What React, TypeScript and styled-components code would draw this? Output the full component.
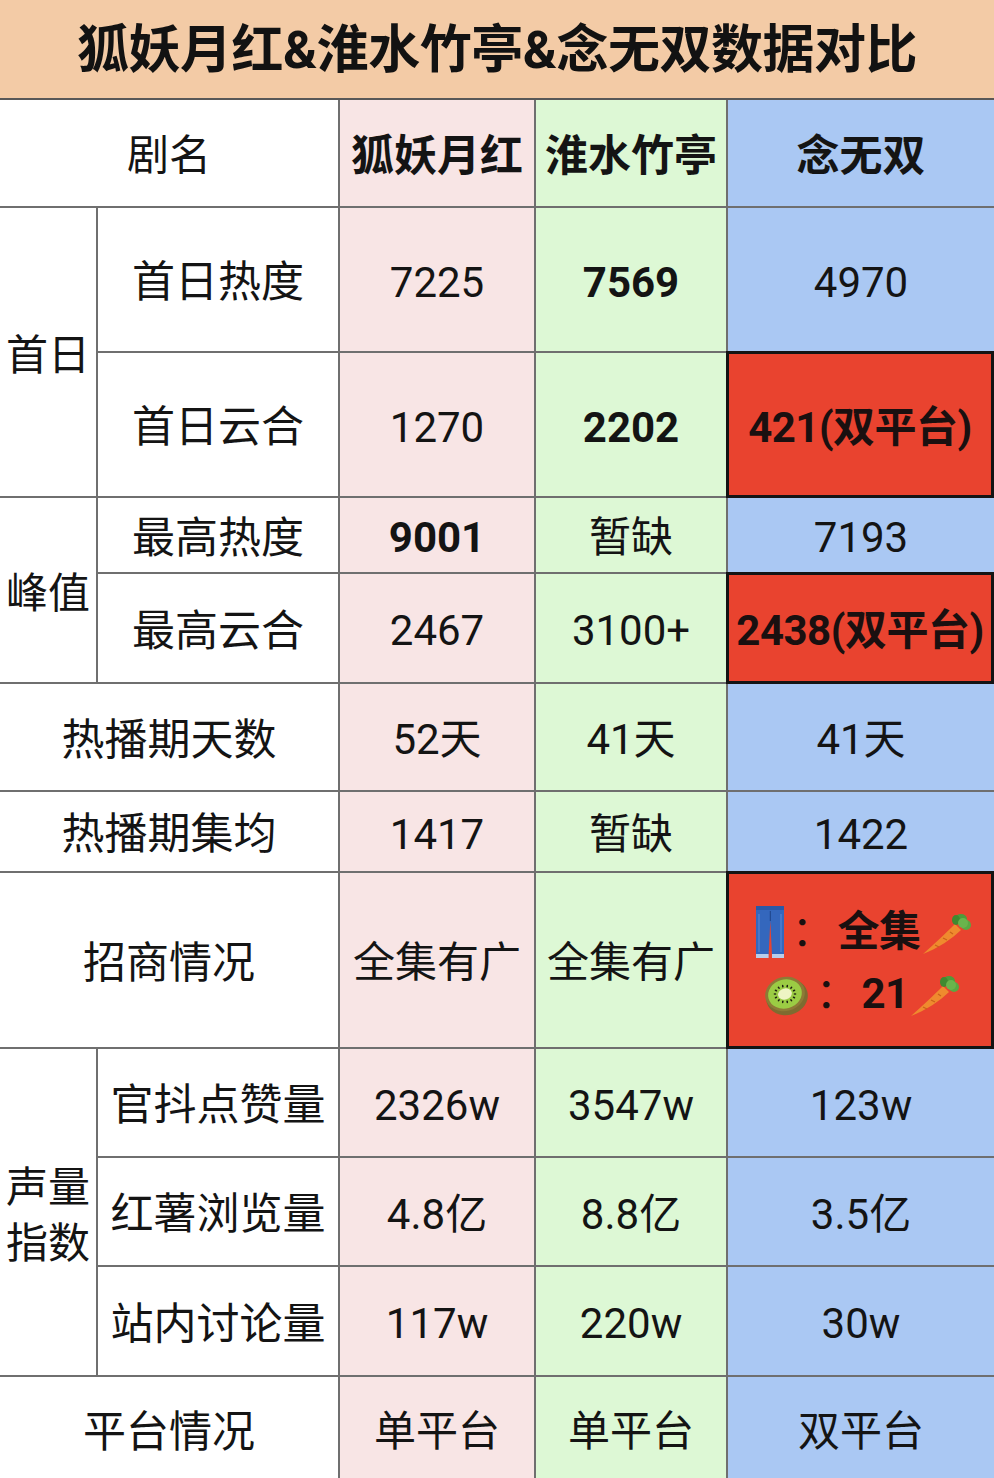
import React from 'react';
import styled, { createGlobalStyle } from 'styled-components';

const GlobalStyle = createGlobalStyle`
    html, body {
        margin: 0;
        padding: 0;
        background: #fff;
    }
    body {
        font-family: Roboto, "Noto Sans CJK SC", sans-serif;
        color: #141414;
    }
`;

const LINE = '#6f6f6f';

const Page = styled.div`
    width: 994px;
    height: 1478px;
    overflow: hidden;
    background: #fff;
`;

const TitleBar = styled.div`
    height: 100px;
    padding-bottom: 8px;
    box-sizing: border-box;
    display: flex;
    align-items: center;
    justify-content: center;
    background: #f3cba6;
    border-bottom: 2px solid #585858;
    font-size: 52px;
    font-weight: 700;
    color: #121212;
    letter-spacing: -0.5px;
`;

const Table = styled.div`
    display: grid;
    grid-template-columns: 98px 242px 196px 192px 266px;
    grid-template-rows: 108px 145px 145px 76px 110px 108px 81px 176px 109px 109px 110px 106px;
`;

interface ICell {
    $row: string;
    $col: string;
    $bg?: string;
    $bold?: boolean;
    $size?: number;
}

const Cell = styled.div<ICell>`
    grid-row: ${(p) => p.$row};
    grid-column: ${(p) => p.$col};
    box-sizing: border-box;
    display: flex;
    align-items: center;
    justify-content: center;
    padding-top: 7px;
    text-align: center;
    background: ${(p) => p.$bg || '#fff'};
    border-right: 2px solid ${LINE};
    border-bottom: 2px solid ${LINE};
    font-size: ${(p) => p.$size || 42}px;
    font-weight: ${(p) => (p.$bold ? 700 : 400)};
    line-height: 1.3;
    white-space: nowrap;
`;

const Alert = styled(Cell)`
    background: #e9432f;
    border: 3px solid #141414;
    margin: -2px 0 0 -2px;
    font-weight: 700;
    color: #1a1010;
    letter-spacing: -0.5px;
`;

const LastCol = styled(Cell)`
    border-right: none;
`;

const Sponsor = styled.div`
    display: flex;
    flex-direction: column;
    align-items: center;
    gap: 4px;
`;

const SponsorLine = styled.div<{ $shift?: number }>`
    display: flex;
    align-items: center;
    margin-left: ${(p) => p.$shift || 0}px;
    height: 58px;
`;

const Colon = styled.span`
    font-weight: 400;
    width: 42px;
    text-align: center;
    margin: 0 4px 0 6px;
`;

const Jeans = () => (
    <svg width="30" height="54" viewBox="0 0 30 54">
        <rect x="1" y="0" width="28" height="5" fill="#2a58a6" />
        <path d="M1 4 H29 L29 49 H17 L15.3 15 L13.6 49 H1 Z" fill="#3467bd" />
        <path d="M15.3 5 V15" stroke="#1f4488" strokeWidth="1" />
        <path d="M4 8 L4 46 M26 8 L26 46" stroke="#5d8ad6" strokeWidth="1" />
        <rect x="1" y="48" width="12.6" height="4" fill="#b9cdea" />
        <rect x="17" y="48" width="12" height="4" fill="#b9cdea" />
    </svg>
);

const seeds = Array.from({ length: 14 }, (_, i) => (i / 14) * Math.PI * 2);

const Kiwi = () => (
    <svg width="46" height="44" viewBox="0 0 46 44">
        <ellipse cx="24" cy="24" rx="21" ry="18" fill="#7e6b30" transform="rotate(-15 24 24)" />
        <ellipse cx="22" cy="21" rx="20" ry="17" fill="#8d7a36" transform="rotate(-15 22 21)" />
        <ellipse cx="22" cy="21" rx="17" ry="14.5" fill="#9bcc44" transform="rotate(-15 22 21)" />
        <ellipse cx="22" cy="21" rx="7" ry="5.5" fill="#eef4c4" transform="rotate(-15 22 21)" />
        {seeds.map((a, i) => (
            <ellipse
                key={i}
                cx={22 + Math.cos(a) * 10}
                cy={21 + Math.sin(a) * 8}
                rx="1.4"
                ry="0.8"
                fill="#1d1d10"
                transform={`rotate(${(a * 180) / Math.PI} ${22 + Math.cos(a) * 10} ${21 + Math.sin(a) * 8})`}
            />
        ))}
    </svg>
);

const Carrot = () => (
    <svg width="50" height="46" viewBox="0 0 50 46">
        <path d="M2 44 C12 35 26 22 34 14 L40 20 C32 28 16 39 2 44 Z" fill="#ef8a2e" />
        <path d="M14 35 L18 37 M22 28 L26 30 M29 22 L32 24" stroke="#c8621a" strokeWidth="1.2" />
        <ellipse cx="40" cy="9" rx="6" ry="5" fill="#4f9b3a" />
        <ellipse cx="45" cy="15" rx="5" ry="5" fill="#5aa842" />
        <ellipse cx="35" cy="10" rx="4" ry="5" fill="#3f8a30" />
        <ellipse cx="42" cy="13" rx="5" ry="5" fill="#6ab44c" />
    </svg>
);

const PINK = '#f8e5e5';
const GREEN = '#ddf8d5';
const BLUE = '#aac8f3';

type Val = { text: string; bold?: boolean };

interface IRow {
    label: string;
    group?: boolean;
    values: Val[];
    alert?: string;
}

const rows: IRow[] = [
    { label: '首日热度', group: true, values: [{ text: '7225' }, { text: '7569', bold: true }, { text: '4970' }] },
    { label: '首日云合', group: true, values: [{ text: '1270' }, { text: '2202', bold: true }], alert: '421(双平台)' },
    { label: '最高热度', group: true, values: [{ text: '9001', bold: true }, { text: '暂缺' }, { text: '7193' }] },
    { label: '最高云合', group: true, values: [{ text: '2467' }, { text: '3100+' }], alert: '2438(双平台)' },
    { label: '热播期天数', values: [{ text: '52天' }, { text: '41天' }, { text: '41天' }] },
    { label: '热播期集均', values: [{ text: '1417' }, { text: '暂缺' }, { text: '1422' }] },
    { label: '招商情况', values: [{ text: '全集有广' }, { text: '全集有广' }] },
    { label: '官抖点赞量', group: true, values: [{ text: '2326w' }, { text: '3547w' }, { text: '123w' }] },
    { label: '红薯浏览量', group: true, values: [{ text: '4.8亿' }, { text: '8.8亿' }, { text: '3.5亿' }] },
    { label: '站内讨论量', group: true, values: [{ text: '117w' }, { text: '220w' }, { text: '30w' }] },
    { label: '平台情况', values: [{ text: '单平台' }, { text: '单平台' }, { text: '双平台' }] },
];

const groups = [
    { label: '首日', row: '2 / 4' },
    { label: '峰值', row: '4 / 6' },
    { label: '声量\n指数', row: '9 / 12' },
];

const GroupLabel = styled.span`
    white-space: pre-line;
    line-height: 1.32;
`;

const App: React.FC = () => {
    return (
        <Page>
            <GlobalStyle />
            <TitleBar>狐妖月红&amp;淮水竹亭&amp;念无双数据对比</TitleBar>
            <Table>
                <Cell $row="1" $col="1 / 3">剧名</Cell>
                <Cell $row="1" $col="3" $bg={PINK} $bold $size={43}>狐妖月红</Cell>
                <Cell $row="1" $col="4" $bg={GREEN} $bold $size={43}>淮水竹亭</Cell>
                <LastCol $row="1" $col="5" $bg={BLUE} $bold $size={43}>念无双</LastCol>

                {groups.map((g) => (
                    <Cell key={g.label} $row={g.row} $col="1">
                        <GroupLabel>{g.label}</GroupLabel>
                    </Cell>
                ))}

                {rows.map((r, i) => {
                    const row = String(i + 2);
                    return (
                        <React.Fragment key={r.label}>
                            <Cell $row={row} $col={r.group ? '2' : '1 / 3'} $size={43}>{r.label}</Cell>
                            <Cell $row={row} $col="3" $bg={PINK} $bold={r.values[0].bold}>{r.values[0].text}</Cell>
                            <Cell $row={row} $col="4" $bg={GREEN} $bold={r.values[1].bold}>{r.values[1].text}</Cell>
                            {r.values[2] && (
                                <LastCol $row={row} $col="5" $bg={BLUE} $bold={r.values[2].bold}>{r.values[2].text}</LastCol>
                            )}
                            {r.alert && <Alert $row={row} $col="5">{r.alert}</Alert>}
                        </React.Fragment>
                    );
                })}

                <Alert $row="8" $col="5">
                    <Sponsor>
                        <SponsorLine $shift={6}>
                            <Jeans />
                            <Colon>：</Colon>
                            <span>全集</span>
                            <Carrot />
                        </SponsorLine>
                        <SponsorLine $shift={2}>
                            <Kiwi />
                            <Colon>：</Colon>
                            <span>21</span>
                            <Carrot />
                        </SponsorLine>
                    </Sponsor>
                </Alert>
            </Table>
        </Page>
    );
};

export default App;
